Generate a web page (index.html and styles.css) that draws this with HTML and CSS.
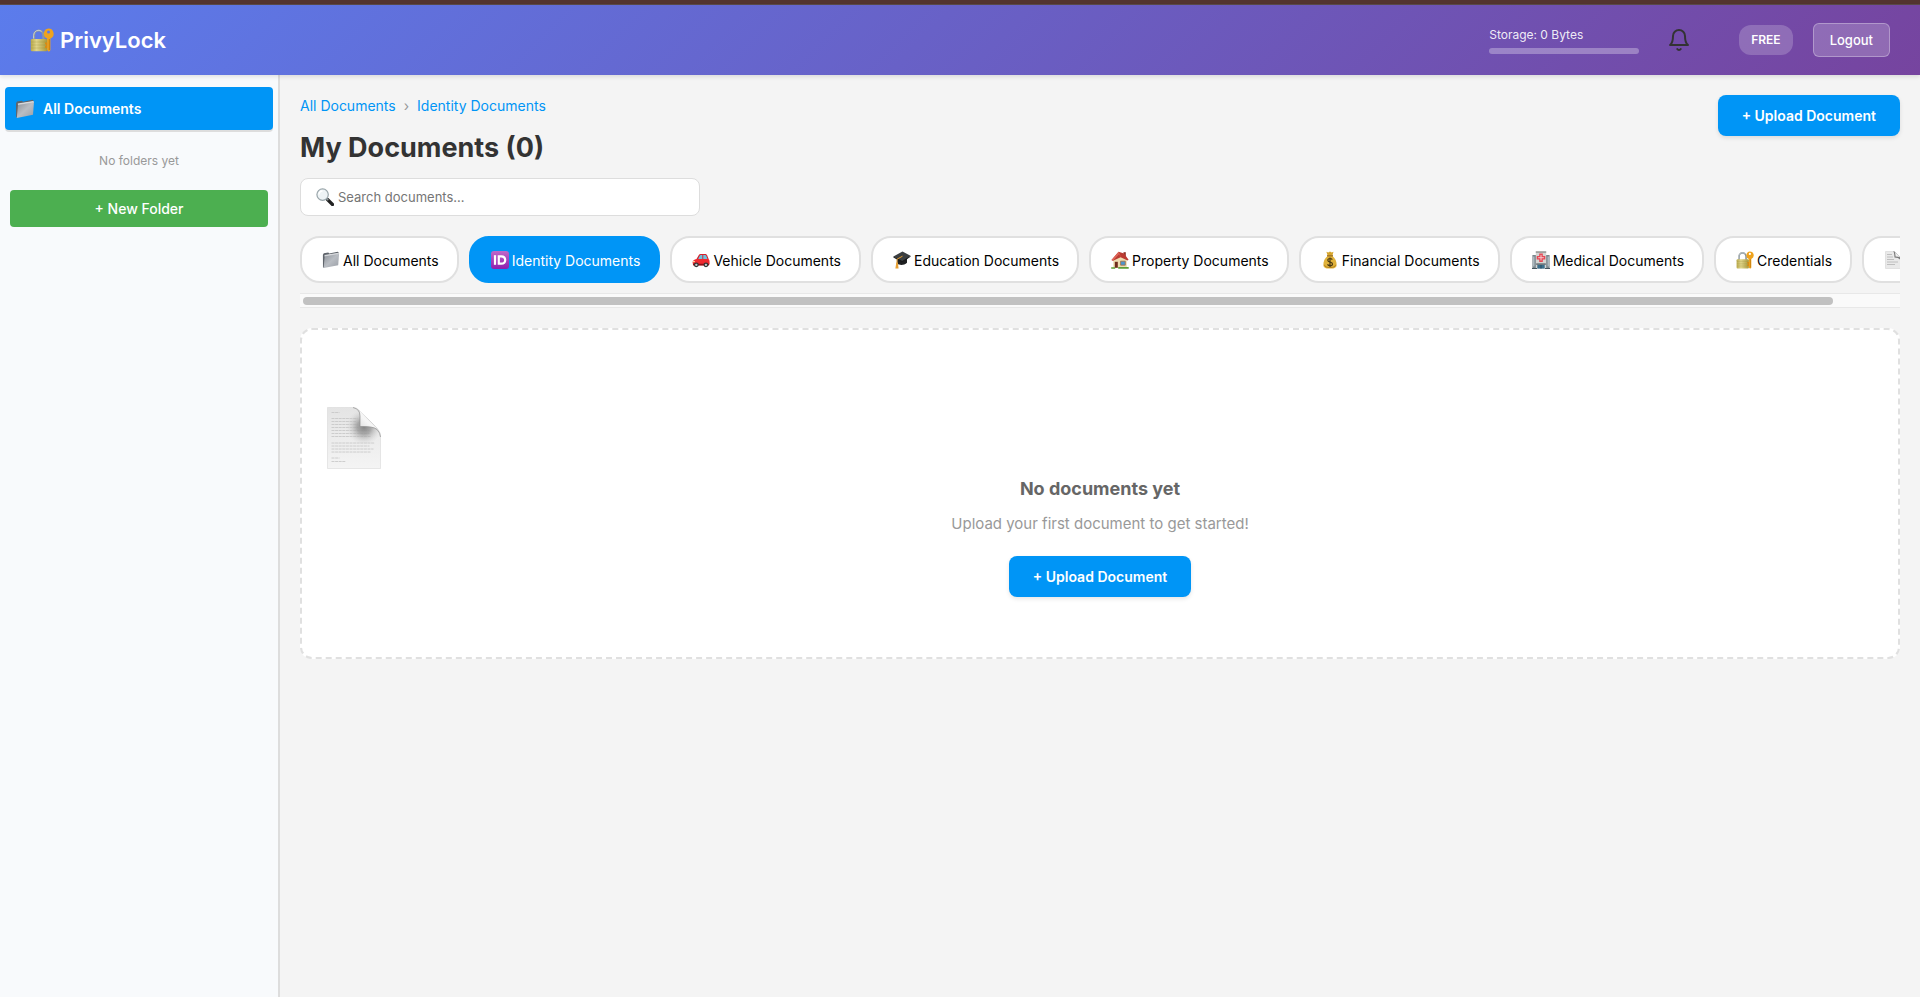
FILE: index.html
```html
<!DOCTYPE html>
<html lang="en">
<head>
<meta charset="utf-8">
<title>PrivyLock</title>
<link rel="stylesheet" href="styles.css">
</head>
<body>
<svg class="sprite" aria-hidden="true">
  <defs>
    <linearGradient id="g-folder" x1="0" y1="0" x2="1" y2="1"><stop offset="0" stop-color="#8b9097"/><stop offset=".5" stop-color="#b9bdc3"/><stop offset="1" stop-color="#9a9ea5"/></linearGradient>
    <linearGradient id="g-lock" x1="0" y1="0" x2="1" y2="0"><stop offset="0" stop-color="#b9a94a"/><stop offset=".35" stop-color="#e0d58a"/><stop offset="1" stop-color="#a8983c"/></linearGradient>
    <linearGradient id="g-id" x1="0" y1="0" x2="0" y2="1"><stop offset="0" stop-color="#c069c9"/><stop offset="1" stop-color="#8e1fae"/></linearGradient>
    <linearGradient id="g-page" x1="0" y1="0" x2="0" y2="1"><stop offset="0" stop-color="#e4e4e4"/><stop offset="1" stop-color="#f4f4f4"/></linearGradient>
    <linearGradient id="g-curl" x1="0" y1="1" x2="1" y2="0"><stop offset="0" stop-color="#dedede"/><stop offset=".4" stop-color="#f6f6f6"/><stop offset="1" stop-color="#ededed"/></linearGradient>
    <radialGradient id="g-shade" cx="37" cy="20" r="18" gradientUnits="userSpaceOnUse"><stop offset="0" stop-color="#858585"/><stop offset=".4" stop-color="#9a9a9a" stop-opacity=".8"/><stop offset="1" stop-color="#d8d8d8" stop-opacity="0"/></radialGradient>
  </defs>
  <symbol id="folder" viewBox="0 0 20 20">
    <path d="M1 4.200 2 2.600 7 1.700l1 1 9.500-1.900 1 .9v3L2 18.500 1.100 18z" fill="#5f646b"/>
    <path d="M2.800 4.500 18.300 2v1.500L3 6z" fill="#d9dbde"/>
    <path d="M3 5.500 19 2.800 18 15.800 1.800 19z" fill="url(#g-folder)"/>
    <path d="M3 5.500 19 2.800" stroke="#dfe1e4" stroke-width=".7"/>
  </symbol>
  <symbol id="lock" viewBox="0 0 24 24">
    <path d="M4 12V7.500a4.700 5 0 0 1 9.400 0V12" fill="none" stroke="#8e989c" stroke-width="2.200"/>
    <path d="M3.600 10.500V7.300a5 5 0 0 1 8-4" fill="none" stroke="#d3dadd" stroke-width=".8"/>
    <rect x=".8" y="11" width="16.400" height="12.300" rx="1.300" fill="url(#g-lock)"/>
    <path d="M1.200 14h15.500M1.200 17h15.500M1.200 20h15.500" stroke="#94852f" stroke-width=".5" opacity=".5"/>
    <path fill-rule="evenodd" d="M18.500.5a5.200 5.200 0 0 1 1.900 10v11.700l-1.600 1.500-1.700-1.600V10.500a5.200 5.200 0 0 1 1.400-10zm0 1.900a1.500 1.500 0 1 0 0 3 1.500 1.500 0 0 0 0-3z" fill="#efa31d"/>
    <path d="M17.200 14.500h-2.200v1.800h1v1.600h-1v2h2.200z" fill="#d98a12"/>
    <path d="M19.300 11v11" stroke="#b36d0c" stroke-width=".7"/>
  </symbol>
  <symbol id="idcard" viewBox="0 0 18 18">
    <rect width="18" height="18" rx="3" fill="url(#g-id)"/>
    <path d="M4 4.200v9.600" stroke="#fff" stroke-width="2.200"/>
    <path d="M7.800 5.300h2.400c2.600 0 4 1.300 4 3.700s-1.400 3.700-4 3.700H7.800z" fill="none" stroke="#fff" stroke-width="2.200"/>
  </symbol>
  <symbol id="car" viewBox="0 0 20 18">
    <path d="M5 8 7.600 3.400C8 2.600 8.700 2.200 9.600 2.200h5c1 0 1.700.4 2.100 1.300L18.500 8z" fill="#d6202a"/>
    <path d="M6.800 7.800 8.700 4c.2-.4.600-.6 1-.6h1.800v4.400zM12.500 3.400h2c.6 0 1 .2 1.200.7l1.500 3.700h-4.700z" fill="#6fc0dc"/>
    <path d="M.6 11.500C1 9.300 2.200 8.500 5 7.800h13.400c1 .8 1.300 2.500 1.100 5.700l-1 1.200H1.500z" fill="#ef2a30"/>
    <path d="M.8 13.200h18.500l-.8 1.800H1.500z" fill="#8f1118"/>
    <circle cx="4.800" cy="14.400" r="2.700" fill="#333"/><circle cx="4.800" cy="14.400" r="1.300" fill="#c5c8cb"/>
    <circle cx="15.500" cy="14.400" r="2.700" fill="#333"/><circle cx="15.500" cy="14.400" r="1.300" fill="#c5c8cb"/>
    <path d="M1.300 10.200h2.200l-.8 1.300H.9z" fill="#ffe4a1"/>
  </symbol>
  <symbol id="cap" viewBox="0 0 18 18">
    <path d="M4.200 7v5.500c2.500 2.200 7 1.900 9.800-.8V6z" fill="#1e2021"/>
    <path d="M.4 5.500 9.500.5l8 4.200-8.200 6.600z" fill="#3b3e40"/>
    <path d="m.4 5.500 8.900 4.600 8.200-5.400v1L9.300 11.600.4 6.500z" fill="#17191a"/>
    <path d="M9.500 5.200 4 8.200v5" fill="none" stroke="#e39a2c" stroke-width="1"/>
    <path d="M3.300 11.500h1.500l.8 6H2.400z" fill="#e8a033"/>
  </symbol>
  <symbol id="house" viewBox="0 0 18 18">
    <path d="M12.500 1.200h2.300v6h-2.300z" fill="#8d3128"/>
    <path d="M2.300 8 7.500 2.600 15.800 8v8.800H2.300z" fill="#eedcb0"/>
    <path d="M7.600.8 13 2.500l4.600 6.300-1 .7-7-3.200L2 9.800l-1.500-.9z" fill="#bb3b32"/>
    <path d="M7.600.8.500 8.900l1.500.9 6-6.600 2.200 3.200z" fill="#dd6457"/>
    <path d="M3.800 10.800h3v6h-3z" fill="#6f2d1c"/>
    <path d="M9.600 10.200h4.700v4H9.600z" fill="#4d95cd" stroke="#a56d40" stroke-width=".8"/>
    <path d="M.2 16.200h4v1.600h-4zM7.200 16h10.500v1.800H7.200z" fill="#5f9e35"/>
  </symbol>
  <symbol id="money" viewBox="0 0 18 18">
    <path d="M5.400.8 7.200 1.500 9 .6l1.700.9L12.500.8 11.400 4.500H6.600z" fill="#d6a52c"/>
    <path d="M6.500 5h5c2.800 2.300 4.300 5.500 4.100 9-.1 2.800-2 3.600-6.600 3.600s-6.500-.8-6.600-3.600c-.2-3.500 1.300-6.700 4.100-9z" fill="#e0b23b"/>
    <path d="M3.500 13.800c.2 2 2 2.700 5.500 2.700s5.300-.7 5.600-2.700" fill="none" stroke="#b9851e" stroke-width="1"/>
    <path d="M6 4.800h6" stroke="#9b6b18" stroke-width="1.300"/>
    <path d="M11.300 8.600c-.5-.8-1.300-1.100-2.300-1.100-1.300 0-2.200.6-2.200 1.700 0 2.500 4.700 1.200 4.700 3.700 0 1.100-1 1.800-2.400 1.800-1.200 0-2.100-.4-2.600-1.300M9 6.500v9.400" fill="none" stroke="#4b3a12" stroke-width="1.200"/>
  </symbol>
  <symbol id="hospital" viewBox="0 0 18 18">
    <path d="M.4 4h3.800v13.600H.4zM13.800 4h3.800v13.600h-3.800z" fill="#79858c"/>
    <path d="M1.200 5.500h1.200v10H1.200zM15.600 5.500h1.200v10h-1.200z" fill="#b8c6cd"/>
    <path d="M3.800.4h10.400v17.200H3.800z" fill="#d5d5d3"/>
    <path d="M3.800.4h10.400v1.300H3.800z" fill="#8c8c8a"/>
    <path d="M9 2.400v8.600M4.700 6.700h8.600" stroke="#e54854" stroke-width="3.600"/>
    <path d="M9 3.900v5.600M6.200 6.700h5.600" stroke="#f6c9cc" stroke-width="1"/>
    <path d="M4.200 12.400h9.600v1.400H4.200z" fill="#55626a"/>
    <path d="M5.300 14h7.400v3.600H5.300z" fill="#3c6f8c"/>
    <path d="M9 14v3.600" stroke="#1f4255" stroke-width=".8"/>
    <path d="M0 17h5v1H0zM13 17h5v1h-5z" fill="#44555f"/>
  </symbol>
  <symbol id="page" viewBox="0 0 54 62">
    <path d="M.5.500H26Q30 .5 33 4L50 21Q53.500 25 53.500 29V61.500H.5z" fill="url(#g-page)" stroke="#d9d9d9" stroke-width=".6"/>
    <path d="M4.500 5.500h8M4.500 11.500h26M4.500 14.500h25M4.500 17.500h26M4.500 20.500h27M4.500 23.500h38M4.500 26.500h38M4.500 29.500h39M4.500 36h43M4.500 39h38M4.500 42h42M4.500 45h39M4.500 51h8M4.500 54.500h14" stroke="#c4c4c4" stroke-width=".8" stroke-dasharray="3 .6"/>
    <path d="M19 .5h7Q30 .5 33 4L50 21Q53.500 25 53.500 29V38H19z" fill="url(#g-shade)"/>
    <path d="M33 4V19.500Q46 19 50.500 22z" fill="url(#g-curl)"/>
    <path d="M26 .5Q33 2 33 9V19.500Q46 19 50 22.500 53.500 26 53.500 30" fill="none" stroke="#8f8f8f" stroke-width=".7"/>
  </symbol>
  <symbol id="page-small" viewBox="0 0 18 18">
    <path d="M1.500.5h9l6 6v11h-15z" fill="#e9e9e9" stroke="#cfcfcf" stroke-width=".5"/>
    <path d="M3 3.500h5M3 6h6M3 8.500h7M3 11h11M3 13.500h8" stroke="#b3b3b3" stroke-width=".8"/>
    <path d="M9 .5q1 0 1.200 2.500l.3 3.500q5 0 6 3V6.500l-6-6z" fill="#777"/>
    <path d="M10.500.5q1 1 1 5 4 0 5 1z" fill="#eee"/>
  </symbol>
  <symbol id="magnifier" viewBox="0 0 18 18">
    <path d="m11.500 11.500 5 5" stroke="#222" stroke-width="3.200" stroke-linecap="round"/>
    <path d="m10.300 10.300 2 2" stroke="#8d979b" stroke-width="1.600"/>
    <circle cx="6.600" cy="6.600" r="5.700" fill="#eef3f5" stroke="#99a5aa" stroke-width="1.200"/>
    <path d="M3 6.500A3.700 3.700 0 0 1 6.500 3" fill="none" stroke="#fff" stroke-width="1.400"/>
  </symbol>
</svg>

<div class="app">
  <div class="strip"></div>
  <header class="header">
    <div class="brand"><svg class="brand-icon"><use href="#lock"/></svg><span>PrivyLock</span></div>
    <div class="header-side">
      <div class="storage">
        <span>Storage: 0 Bytes</span>
        <div class="storage-bar"></div>
      </div>
      <button class="bell" aria-label="Notifications">
        <svg viewBox="0 0 24 24" fill="none" stroke="#333" stroke-width="2" stroke-linecap="round" stroke-linejoin="round"><path d="M18 8A6 6 0 0 0 6 8c0 7-3 9-3 9h18s-3-2-3-9"/><path d="M13.730 21a2 2 0 0 1-3.460 0"/></svg>
      </button>
      <span class="plan">FREE</span>
      <button class="logout">Logout</button>
    </div>
  </header>

  <div class="body">
    <aside class="sidebar">
      <button class="side-item"><svg class="side-icon"><use href="#folder"/></svg>All Documents</button>
      <p class="side-empty">No folders yet</p>
      <button class="new-folder">+ New Folder</button>
    </aside>

    <main class="main">
      <div class="top">
        <div class="top-left">
          <nav class="crumbs"><a href="#">All Documents</a><span>›</span><a href="#">Identity Documents</a></nav>
          <h1 class="title">My Documents (0)</h1>
          <label class="search">
            <svg class="search-icon"><use href="#magnifier"/></svg>
            <input type="text" placeholder="Search documents..." aria-label="Search documents">
          </label>
        </div>
        <button class="upload">+ Upload Document</button>
      </div>

      <div class="tabs">
        <button class="tab"><svg><use href="#folder"/></svg>All Documents</button>
        <button class="tab active"><svg><use href="#idcard"/></svg>Identity Documents</button>
        <button class="tab"><svg><use href="#car"/></svg>Vehicle Documents</button>
        <button class="tab"><svg><use href="#cap"/></svg>Education Documents</button>
        <button class="tab"><svg><use href="#house"/></svg>Property Documents</button>
        <button class="tab"><svg><use href="#money"/></svg>Financial Documents</button>
        <button class="tab"><svg><use href="#hospital"/></svg>Medical Documents</button>
        <button class="tab"><svg><use href="#lock"/></svg>Credentials</button>
        <button class="tab" aria-label="Other"><svg><use href="#page-small"/></svg></button>
      </div>
      <div class="track"><div class="thumb"></div></div>

      <section class="empty">
        <svg class="empty-icon"><use href="#page"/></svg>
        <h2>No documents yet</h2>
        <p>Upload your first document to get started!</p>
        <button class="upload">+ Upload Document</button>
      </section>
    </main>
  </div>
</div>
</body>
</html>
```
FILE: styles.css
```css
* { box-sizing: border-box; }
body {
  margin: 0;
  font-family: Inter, "Liberation Sans", sans-serif;
  font-size: 14px;
  color: #333;
  background: #f4f4f4;
}
button, input { font: inherit; }
button { border: 0; cursor: pointer; }
h1, h2, p { margin: 0; }
.sprite { position: absolute; width: 0; height: 0; }

.app { display: flex; flex-direction: column; min-height: 100vh; }
.strip { height: 5px; background: #53342f; border-bottom: 1px solid #5b4a49; }

.header {
  display: flex;
  align-items: center;
  justify-content: space-between;
  height: 70px;
  padding: 0 30px;
  color: #fff;
  background: linear-gradient(135deg, #5b7cec 0%, #76449f 100%);
  box-shadow: 0 2px 4px rgba(0, 0, 0, .1);
  position: relative;
}
.brand { display: flex; align-items: center; gap: 6px; font-size: 22px; font-weight: 600; }
.brand-icon { width: 24px; height: 24px; }
.header-side { display: flex; align-items: center; gap: 20px; }
.storage { width: 150px; font-size: 12px; line-height: 16px; color: rgba(255, 255, 255, .9); }
.storage-bar { height: 6px; margin-top: 5px; border-radius: 3px; background: rgba(255, 255, 255, .3); }
.bell { width: 60px; height: 40px; padding: 0 20px 0 8px; background: none; }
.bell svg { display: block; width: 24px; height: 24px; }
.plan {
  padding: 0 12px;
  font-size: 12px;
  line-height: 30px;
  font-weight: 600;
  border-radius: 12px;
  background: rgba(255, 255, 255, .2);
}
.logout {
  height: 34px;
  padding: 0 16px;
  font-size: 13px;
  font-weight: 500;
  color: #fff;
  border: 1px solid rgba(255, 255, 255, .3);
  border-radius: 6px;
  background: rgba(255, 255, 255, .2);
}

.body { display: flex; flex: 1; }
.sidebar {
  display: flex;
  flex-direction: column;
  flex: none;
  width: 280px;
  padding: 12px 5px;
  background: #f8fafc;
  border-right: 2px solid #ddd;
}
.side-item {
  display: flex;
  align-items: center;
  gap: 8px;
  height: 43px;
  padding: 0 10px;
  font-weight: 600;
  color: #fff;
  background: #0095f6;
  border-radius: 4px;
  box-shadow: 0 2px 0 #ddd;
}
.side-icon { width: 20px; height: 20px; }
.side-empty { padding: 21px 0 19px; font-size: 12px; line-height: 20px; text-align: center; color: #999; }
.new-folder {
  height: 37px;
  margin: 0 5px;
  font-weight: 500;
  color: #fff;
  background: #4caf50;
  border-radius: 4px;
}

.main { flex: 1; min-width: 0; padding: 20px; }
.top { display: flex; justify-content: space-between; align-items: flex-start; }
.crumbs { display: flex; gap: 8px; line-height: 22px; color: #999; }
.crumbs a { color: #0095f6; text-decoration: none; }
.title { margin-top: 13px; font-size: 27px; line-height: 36px; font-weight: 700; }
.search {
  display: flex;
  align-items: center;
  gap: 4px;
  width: 400px;
  height: 38px;
  margin-top: 12px;
  padding: 0 15px;
  background: #fff;
  border: 1px solid #ddd;
  border-radius: 8px;
}
.search-icon { width: 18px; height: 18px; }
.search input { flex: 1; min-width: 0; padding: 0; border: 0; outline: 0; background: none; font-size: 13px; }
.search input::placeholder { color: #757575; }
.upload {
  height: 41px;
  padding: 0 24px;
  font-weight: 600;
  color: #fff;
  background: #0095f6;
  border-radius: 8px;
  box-shadow: 0 2px 4px rgba(0, 0, 0, .1);
}

.tabs { display: flex; gap: 10px; margin-top: 20px; padding-bottom: 10px; overflow: hidden; }
.tab {
  display: flex;
  flex: none;
  align-items: center;
  gap: 3px;
  height: 47px;
  padding: 1px 18px 0 20px;
  white-space: nowrap;
  color: #000;
  background: #fff;
  border: 2px solid #e0e0e0;
  border-radius: 20px;
}
.tab svg { width: 18px; height: 18px; }
.tab.active { color: #fff; background: #0095f6; border-color: #0095f6; }
.track { height: 15px; padding: 3px; background: #fafafa; border: solid #e8e8e8; border-width: 1px 0; }
.thumb { width: 96%; height: 8px; border-radius: 4px; background: #c1c1c1; }

.empty {
  display: flex;
  flex-direction: column;
  align-items: center;
  margin-top: 20px;
  padding: 77px 25px 60px;
  background: #fff;
  border: 2px dashed #e0e0e0;
  border-radius: 12px;
}
.empty-icon { align-self: flex-start; width: 54px; height: 62px; }
.empty h2 { margin-top: 8px; font-size: 18px; line-height: 24px; color: #666; }
.empty p { margin: 11px 0 20px; font-size: 15px; line-height: 24px; color: #999; }
```
